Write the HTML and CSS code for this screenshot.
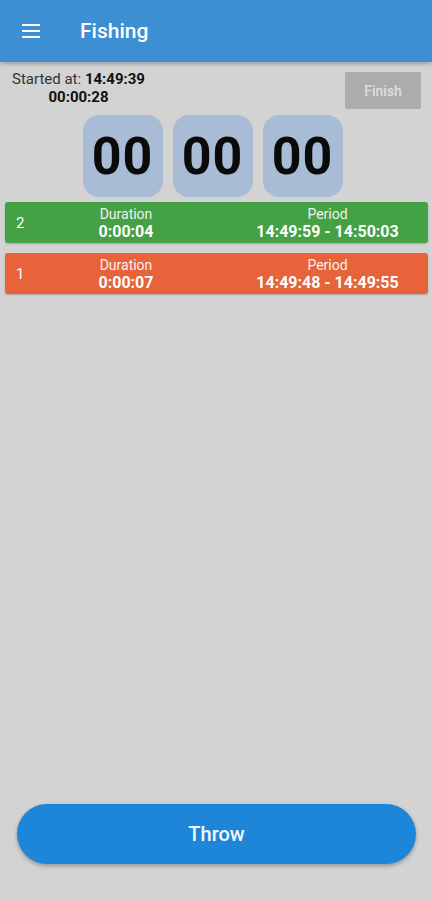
FILE: index.html
```html
<!DOCTYPE html>
<html>
<head>
    <title>Fishing</title>
    <link rel="stylesheet" href="styles.css">
</head>
<body>
    <div class="app">
        <!-- Toolbar -->
        <div class="toolbar">
            <svg class="menu-icon" width="24" height="24" viewBox="0 0 24 24">
                <path d="M3 6h18M3 12h18M3 18h18" stroke="#fff" stroke-width="2" fill="none"/>
            </svg>
            <span class="title">Fishing</span>
        </div>

        <div class="content">
            <!-- Session info -->
            <div class="top-row">
                <div class="started">
                    <div>Started at: <b>14:49:39</b></div>
                    <div class="elapsed">00:00:28</div>
                </div>
                <button class="finish">Finish</button>
            </div>

            <!-- Current throw timer -->
            <div class="timer">
                <div class="digit-box">00</div>
                <div class="digit-box">00</div>
                <div class="digit-box">00</div>
            </div>

            <!-- Throws list -->
            <div class="throws">
                <div class="throw green">
                    <span class="num">2</span>
                    <div class="col dur"><span>Duration</span><b>0:00:04</b></div>
                    <div class="col per"><span>Period</span><b>14:49:59 - 14:50:03</b></div>
                </div>
                <div class="throw orange">
                    <span class="num">1</span>
                    <div class="col dur"><span>Duration</span><b>0:00:07</b></div>
                    <div class="col per"><span>Period</span><b>14:49:48 - 14:49:55</b></div>
                </div>
            </div>
        </div>

        <div class="bottom">
            <button class="throw-btn">Throw</button>
        </div>
    </div>
</body>
</html>
```

FILE: styles.css
```css
body { margin: 0; background: #d3d3d3; font-family: Roboto, "Liberation Sans", sans-serif; }
.app { width: 432px; height: 900px; display: flex; flex-direction: column; }
.toolbar { height: 62px; background: #3d8fd4; display: flex; align-items: center; padding-left: 19px; box-shadow: 0 2px 4px rgba(0,0,0,0.25); }
.menu-icon { width: 24px; height: 24px; }
.title { color: #fff; font-size: 21px; font-weight: 500; margin-left: 37px; }
.content { flex: 1; padding: 0 4px 0 5px; }
.top-row { display: flex; justify-content: space-between; padding: 8px 7px 0 7px; height: 43px; }
.started { font-size: 15px; color: #333; line-height: 18px; }
.started b { color: #111; }
.elapsed { text-align: center; font-weight: bold; color: #111; }
.finish { width: 76px; height: 37px; margin-top: 2px; background: #acacac; color: #dedede; border: none; border-radius: 2px; font-family: inherit; font-size: 14px; font-weight: 500; }
.timer { display: flex; justify-content: center; gap: 10px; margin-top: 2px; padding-right: 8px; }
.digit-box { width: 80px; height: 82px; background: #a8bcd5; border-radius: 16px; display: flex; align-items: center; justify-content: center; font-size: 52px; font-weight: bold; color: #0a0a0a; letter-spacing: 1px; }
.throws { margin-top: 5px; display: flex; flex-direction: column; gap: 10px; }
.throw { height: 41px; border-radius: 3px; display: flex; align-items: center; color: #fff; font-size: 14px; box-shadow: 0 1px 2px rgba(0,0,0,0.2); }
.green { background: #44a146; }
.orange { background: #e8623a; }
.num { width: 26px; padding-left: 11px; font-size: 15px; }
.col { display: flex; flex-direction: column; align-items: center; line-height: 18px; }
.col span { color: #f2f2f2; }
.col b { font-size: 16px; }
.dur { width: 122px; margin-left: 23px; }
.per { flex: 1; margin-left: 40px; }
.bottom { padding: 0 16px 36px 17px; }
.throw-btn { width: 100%; height: 60px; border: none; border-radius: 30px; background: #1e86d8; color: #f4f8fc; font-family: inherit; font-size: 20px; font-weight: 500; box-shadow: 0 2px 4px rgba(0,0,0,0.3); }
```
